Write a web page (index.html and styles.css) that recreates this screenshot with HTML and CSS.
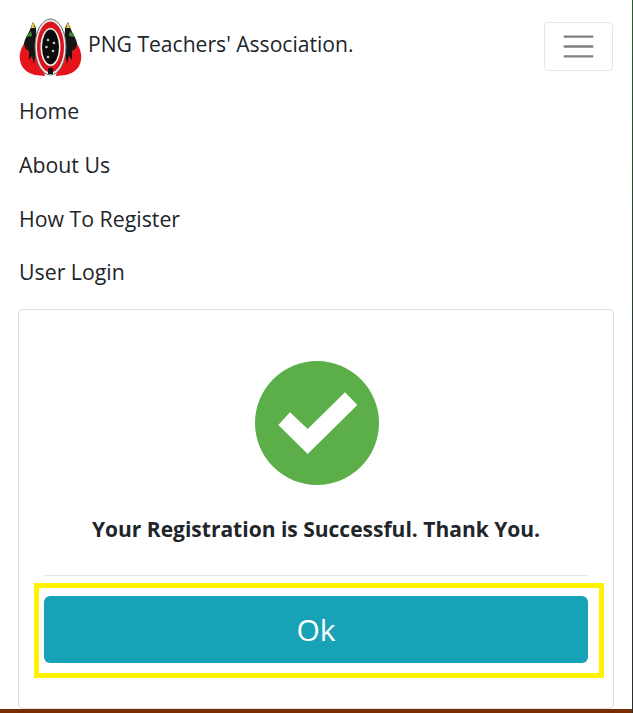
FILE: index.html
```html
<!DOCTYPE html>
<html lang="en">
<head>
<meta charset="utf-8">
<title>PNG Teachers' Association</title>
<link rel="stylesheet" href="styles.css">
</head>
<body>
<div class="page">
  <nav class="navbar">
    <div class="topbar">
      <a class="brand" href="#">
        <svg class="logo" viewBox="0 0 64 62" width="64" height="62" aria-hidden="true">
          <path d="M6 26 C2 32 0 38 1 44 C2 52 8 57 16 59 L26 60 L20 30 Z" fill="#e8141c"/>
          <path d="M57 26 C61 32 63 38 62 44 C61 52 55 57 47 59 L37 60 L43 30 Z" fill="#e8141c"/>
          <path d="M14 6 L17 12 L18 34 L16 42 L15 48 L13 40 L10 44 L10 35 L6 32 L5 27 C6 23 8 19 10 16 Z" fill="#141414"/>
          <path d="M49 6 L46 12 L45 34 L47 42 L48 48 L50 40 L53 44 L53 35 L57 32 L58 27 C57 23 55 19 53 16 Z" fill="#141414"/>
          <path d="M12 12 L16 12 L14 6 Z" fill="#e6d23a"/>
          <path d="M51 12 L47 12 L49 6 Z" fill="#e6d23a"/>
          <path d="M7 21 L12 15 L13 20 Z" fill="#3f8f3a"/>
          <path d="M56 21 L51 15 L50 20 Z" fill="#3f8f3a"/>
          <ellipse cx="31.5" cy="31" rx="15.5" ry="28" fill="#ececec" stroke="#666" stroke-width="1"/>
          <ellipse cx="31.5" cy="31" rx="13.5" ry="25.5" fill="#d8141c"/>
          <ellipse cx="31.5" cy="31" rx="10" ry="19" fill="#f2f2f2"/>
          <ellipse cx="31.5" cy="31" rx="8.5" ry="17.5" fill="#0b0b0b"/>
          <circle cx="29" cy="24" r="1.3" fill="#c4c4c4"/>
          <circle cx="35" cy="27" r="1.3" fill="#c4c4c4"/>
          <circle cx="27.5" cy="31" r="1.3" fill="#c4c4c4"/>
          <circle cx="34" cy="35" r="1.3" fill="#c4c4c4"/>
          <circle cx="29" cy="41" r="1.3" fill="#c4c4c4"/>
          <rect x="29" y="52" width="5" height="6" fill="#111"/>
        </svg>
        <span class="brand-name">PNG Teachers' Association.</span>
      </a>
      <button class="toggler" type="button" aria-label="Toggle navigation">
        <svg viewBox="0 0 30 30" width="37" height="37" aria-hidden="true">
          <path d="M3 7h24M3 15h24M3 23h24" stroke="#808080" stroke-width="2" fill="none"/>
        </svg>
      </button>
    </div>
    <ul class="nav">
      <li><a href="#">Home</a></li>
      <li><a href="#">About Us</a></li>
      <li><a href="#">How To Register</a></li>
      <li><a href="#">User Login</a></li>
    </ul>
  </nav>
  <section class="card">
    <svg class="check" viewBox="0 0 124 124" width="124" height="124" aria-hidden="true">
      <circle cx="62" cy="62" r="62" fill="#5cae48"/>
      <path d="M23.3 64 L35 51.3 L52.7 68 L90 31.3 L102.3 44 L52.7 93 Z" fill="#fff"/>
    </svg>
    <h1 class="message">Your Registration is Successful. Thank You.</h1>
    <hr class="divider">
    <div class="highlight">
      <button class="ok" type="button">Ok</button>
    </div>
  </section>
</div>
<div class="footer-strip"></div>
</body>
</html>
```
FILE: styles.css
```css
* { box-sizing: border-box; }
html, body { height: 100%; }
body {
  margin: 0;
  height: 713px;
  overflow: hidden;
  background: #fff;
  color: #212529;
  font-family: "Open Sans", "Noto Sans", sans-serif;
  display: flex;
  flex-direction: column;
  border-right: 1px solid #2b2f30;
  border-image: linear-gradient(#2a5a30, #2b2f30 60%) 1;
}
.page { flex: 1; min-height: 0; padding: 0 18px; }
.navbar { padding-top: 16px; }
.topbar { display: flex; justify-content: space-between; align-items: flex-start; padding-right: 1px; }
.brand { display: flex; align-items: center; gap: 5px; margin-left: 1px; color: #212529; text-decoration: none; font-size: 21.1px; }
.brand-name { padding-bottom: 8px; }
.logo { display: block; }
.toggler {
  display: flex; align-items: center; justify-content: center;
  width: 69px; height: 49px; margin-top: 6px; padding: 0;
  background: transparent; border: 1px solid #e6e6e6; border-radius: 4px;
}
.nav { list-style: none; margin: 6px 0 0; padding: 0 0 0 1px; }
.nav li { height: 53.7px; display: flex; align-items: center; }
.nav a { color: #212529; text-decoration: none; font-size: 21.3px; }
.card {
  margin-top: 10px;
  height: 400px;
  border: 1px solid #dfdfdf;
  border-radius: 5px;
  padding: 51px 15px 0;
  display: flex;
  flex-direction: column;
  align-items: center;
}
.check { display: block; flex: none; margin-left: 2px; }
.message { margin: 29px 0 0; font-size: 21px; font-weight: 700; line-height: 30px; color: #212529; }
.divider { align-self: stretch; margin: 31px 10px 0; border: 0; border-top: 1px solid #e6e6e6; }
.highlight { align-self: stretch; margin: 7px -6px 0 0; border: 5px solid #fff200; padding: 8px 11px 10px 5px; }
.ok {
  display: block; width: 100%; height: 67px;
  background: #17a2b8; color: #fff; border: 0; border-radius: 6px;
  font: inherit; font-size: 30px;
}
.footer-strip { flex: none; height: 4px; background: #7a2e00; }
```
